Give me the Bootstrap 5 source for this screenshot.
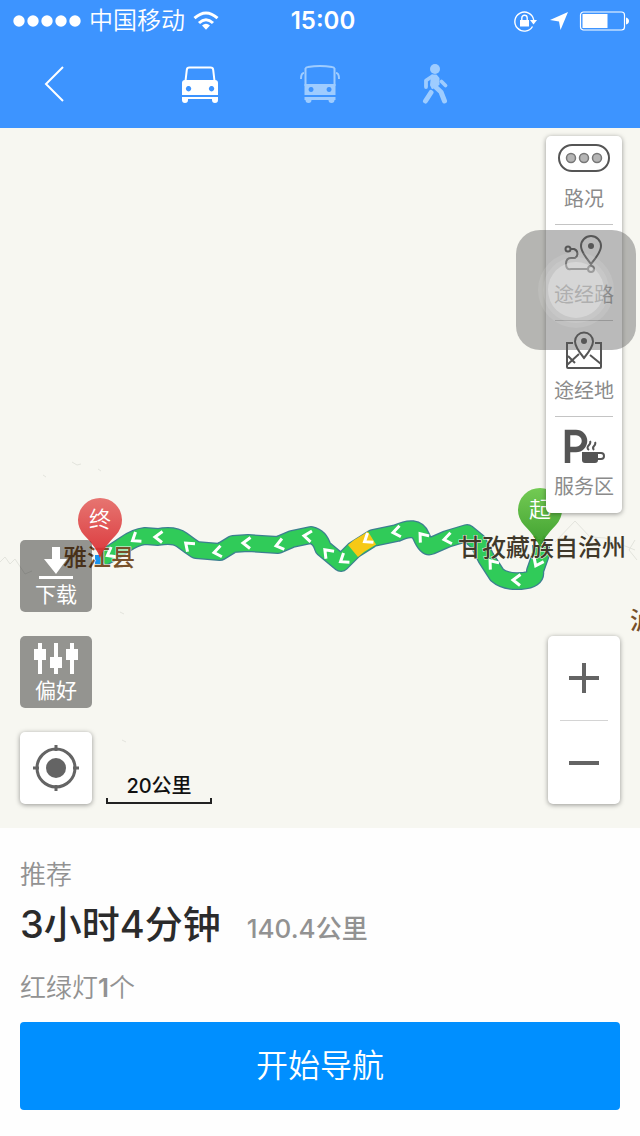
<!DOCTYPE html>
<html lang="zh-CN">
<head>
<meta charset="utf-8">
<meta name="viewport" content="width=device-width, initial-scale=1">
<title>开始导航</title>
<link href="https://cdn.jsdelivr.net/npm/bootstrap@5.3.0/dist/css/bootstrap.min.css" rel="stylesheet">
<style>
  body { font-family: Inter, "Noto Sans CJK SC", sans-serif; background: #fefefe; color: #2e2e2e; }
  svg { display: block; flex: none; }
  button { font-family: inherit; }
  .top-area { background: #3d94ff; color: #fff; }
  .status-bar, .mode-bar { display: grid; grid-template-columns: 1fr auto 1fr; align-items: center; }
  .status-bar { height: 40px; font-size: 24px; line-height: 40px; padding: 1px 11px 0; }
  .status-icons { gap: 10px; }
  .clock { font-weight: 600; padding-left: 6px; }
  .carrier { font-weight: 350; }
  .mode-bar { height: 88px; padding: 0 20px; }
  .plain-btn { background: none; border: 0; padding: 0; color: inherit; display: flex; align-items: center; justify-content: center; }
  .back-btn { width: 68px; height: 88px; }
  .mode-btn { width: 120px; height: 88px; color: #9eccff; }
  .mode-btn.active { color: #fff; }
  .map-area { background: #f7f7f1; padding: 8px 20px 24px; }
  .map-canvas { width: 100%; height: 100%; }
  .map-canvas text { font-size: 24px; font-weight: 500; }
  .map-canvas .pin-text { font-size: 22px; font-weight: 350; }
  .float-box { background: #fff; border-radius: 5px; box-shadow: 0 1px 5px rgba(0,0,0,.4); color: #646464; }
  .tool-list { width: 76px; padding: 0 9px; margin-right: -2px; }
  .tool-item { width: 100%; height: 96px; padding: 9px 0 0; flex-direction: column; justify-content: flex-start; gap: 9px; border-bottom: 1px solid #c4c4c4; color: #555; }
  .tool-item:first-child { height: 89px; padding-top: 2px; }
  .tool-item:last-child { border-bottom: 0; }
  .tool-name { font-size: 20px; line-height: 24px; color: #8b8b8b; white-space: nowrap; }
  .dark-box { width: 72px; height: 72px; padding-top: 4px; border-radius: 5px; background: rgba(0,0,0,.4); color: #fff; flex-direction: column; font-size: 21px; line-height: 28px; }
  .square-box { width: 72px; height: 72px; }
  .zoom-box { width: 72px; padding: 0 12px; }
  .zoom-btn { width: 48px; height: 84px; }
  .zoom-btn + .zoom-btn { border-top: 1px solid #d4d4d4; }
  .scale-mark { width: 106px; margin-left: 14px; color: #111; text-align: center; font-size: 20px; line-height: 24px; font-weight: 500; }
  .scale-line { height: 6px; border: 2px solid #222; border-top: 0; }
  .touch-pad { right: 4px; top: 102px; width: 120px; height: 120px; border-radius: 24px; background: rgba(90,90,90,.42); pointer-events: none; }
  .touch-ring { width: 76px; height: 76px; border-radius: 50%; background: rgba(255,255,255,.1); }
  .touch-ring.mid { width: 66px; height: 66px; }
  .touch-ring.core { width: 56px; height: 56px; background: rgba(255,255,255,.28); }
  .route-panel { padding: 29px 20px 26px; color: #929292; font-size: 26px; }
  .panel-line { line-height: 36px; font-weight: 350; }
  .route-sum { height: 69px; line-height: 62px; gap: 26px; font-weight: 500; }
  .route-time { font-size: 38px; color: #2b2b2b; }
  .start-btn { height: 88px; border: 0; border-radius: 4px; background: #008fff; font-size: 32px; font-weight: 350; color: #fff; margin-top: 16px; }
</style>
</head>
<body class="d-flex flex-column min-vh-100">
<header class="top-area">
  <div class="status-bar">
    <div class="d-flex align-items-center">
      <svg width="70" height="14" fill="#fff" aria-hidden="true"><circle cx="8" cy="7" r="5.7"/><circle cx="22" cy="7" r="5.7"/><circle cx="36" cy="7" r="5.7"/><circle cx="50" cy="7" r="5.7"/><circle cx="64" cy="7" r="5.7"/></svg>
      <span class="carrier ms-2">中国移动</span>
      <svg class="ms-2" width="26" height="20" viewBox="0 0 26 20" fill="none" stroke="#fff" stroke-width="3" aria-hidden="true"><path d="M1.5 7.2Q13-3.2 24.5 7.2M6 12Q13 5.5 20 12"/><path d="M9 14.5Q13 11 17 14.5L13 18.8Z" fill="#fff" stroke="none"/></svg>
    </div>
    <span class="clock">15:00</span>
    <div class="status-icons d-flex align-items-center justify-content-end">
      <svg width="24" height="24" viewBox="0 0 24 24" fill="none" stroke="#fff" stroke-width="1.4" aria-hidden="true"><path d="M19.5 17.5A9.5 9.5 0 1 1 20.7 11"/><path d="M17 11h7l-3.500 4.500z" fill="#fff" stroke="none"/><path d="M7 11h9v6.500H7z" fill="#fff" stroke="none"/><path d="M8.800 11V9a2.700 2.700 0 0 1 5.400 0v2"/></svg>
      <svg width="22" height="20" viewBox="0 0 22 20" fill="#fff" aria-hidden="true"><path d="M21 1 13.500 19 12 10.500 3 9z"/></svg>
      <svg width="50" height="20" viewBox="0 0 50 20" aria-hidden="true"><rect x="1.500" y="1" width="44" height="18" rx="3" fill="none" stroke="#fff" stroke-width="1.200"/><path fill="#fff" d="M3.500 3h25v14h-25zM47 6.500q3 1 3 3.500t-3 3.500z"/></svg>
    </div>
  </div>
  <div class="mode-bar">
    <button class="plain-btn back-btn" aria-label="返回"><svg width="20" height="36" viewBox="0 0 20 36" fill="none" stroke="#fff" stroke-width="2"><path d="M19 1 2 18l17 17"/></svg></button>
    <nav class="d-flex" aria-label="出行方式">
      <button class="plain-btn mode-btn active" aria-label="驾车"><svg width="40" height="40" viewBox="0 0 40 40"><path d="M5.500 17 6.800 5.800Q7 3.500 9.500 3.500h21q2.500 0 2.700 2.300L34.500 17" fill="none" stroke="currentColor" stroke-width="2"/><path fill="currentColor" fill-rule="evenodd" d="M5 16h30q3 0 3 3v12H2V19q0-3 3-3zm3.500 6a2.700 2.700 0 1 0 .1 0zm23 0a2.700 2.700 0 1 0 .1 0zM2 33h36v3q0 3-3 3t-3-3v-1H8v1q0 3-3 3t-3-3z"/></svg></button>
      <button class="plain-btn mode-btn" aria-label="公交"><svg width="40" height="40" viewBox="0 0 40 40"><path d="M5.500 22V4.500Q6 3.200 8 3q12-2 24 0 2 .2 2.500 1.500V22M4 9Q1 9 1 15M36 9q3 0 3 6" fill="none" stroke="currentColor" stroke-width="2"/><path fill="currentColor" fill-rule="evenodd" d="M4.500 20h31v11h-31zm6.500 3a2.500 2.500 0 1 0 .1 0zm18 0a2.500 2.500 0 1 0 .1 0zM4.500 33h31v3h-1q0 3-3 3t-3-3h-17q0 3-3 3t-3-3h-1z"/></svg></button>
      <button class="plain-btn mode-btn" aria-label="步行"><svg width="40" height="42" viewBox="5 0 40 42" fill="none" stroke="currentColor" stroke-linecap="round" stroke-linejoin="round"><circle cx="20" cy="6" r="5" fill="currentColor" stroke="none"/><path stroke-width="3.800" d="M17 13.500 11 17.500v6.500M26.500 18.500l4 4"/><path fill="currentColor" stroke-width="2" d="M17 12.500h4l2.500 3v6l-6 3.500-1.500-3z"/><path stroke-width="5" d="m19.500 23 6.500 6 3.500 9M16 29.500 10.500 38"/></svg></button>
    </nav>
  </div>
</header>

<main class="map-area position-relative overflow-hidden flex-fill d-flex flex-column justify-content-between">
  <svg class="map-canvas position-absolute top-0 start-0" viewBox="0 128 640 700" preserveAspectRatio="xMidYMid slice" role="img" aria-label="雅江县至甘孜藏族自治州路线">
    <defs>
      <linearGradient id="redPin" x1="0" y1="0" x2="0" y2="1"><stop offset="0" stop-color="#e56b67"/><stop offset="1" stop-color="#d9292e"/></linearGradient>
      <linearGradient id="greenPin" x1="0" y1="0" x2="0" y2="1"><stop offset="0" stop-color="#6cc84b"/><stop offset="1" stop-color="#349a24"/></linearGradient>
      <path id="chev" d="M4.500-5.500-3 0l7 5.500" fill="none" stroke="#fff" stroke-width="3"/>
      <path id="road" d="M102 558Q113 553 124 545T145 536L158 537Q174 534 182 540T196 550L220 552 233 544 248 543 278 545 292 539 311 535Q320 537 323 548L341 563 354 550 373 538 397 533Q416 524 421 536T431 546L447 539 467 533 478 542 486 558 497 575Q505 582 521 581T535 571L541 554 541 545"/>
    </defs>
    <path d="M0 562 5 557 10 564 15 559 25 574 32 571M555 542l20-21 15 16 15 1 30 12M635 540l-6 10 8 10M72 462l5 3 4-1M43 475l3 2M120 612l4 2M122 740l4 2M98 469l3 2" fill="none" stroke="#e3e4dd"/>
    <g fill="none" stroke-linejoin="round">
      <use href="#road" stroke="#3c7f90" stroke-width="18"/>
      <use href="#road" stroke="#30cb59" stroke-width="15.500"/>
      <path d="m353 551 6-5 13-8" stroke="#f6c916" stroke-width="15.500"/>
    </g>
    <g>
      <use href="#chev" transform="translate(135 539)rotate(-35)"/><use href="#chev" transform="translate(158 537)"/><use href="#chev" transform="translate(188 545)rotate(40)"/><use href="#chev" transform="translate(217 552)rotate(-10)"/><use href="#chev" transform="translate(246 543)"/><use href="#chev" transform="translate(279 545)rotate(-15)"/><use href="#chev" transform="translate(307 536)rotate(5)"/><use href="#chev" transform="translate(327 552)rotate(45)"/><use href="#chev" transform="translate(343 560)rotate(-35)"/><use href="#chev" transform="translate(367 540)rotate(-35)"/><use href="#chev" transform="translate(396 532)rotate(-10)"/><use href="#chev" transform="translate(422 536)rotate(50)"/><use href="#chev" transform="translate(447 539)rotate(-10)"/><use href="#chev" transform="translate(492 563)rotate(50)"/><use href="#chev" transform="translate(516 580)"/><use href="#chev" transform="translate(537 563)rotate(-65)"/><use href="#chev" transform="translate(110 554)rotate(-30)"/>
    </g>
    <path d="M95 555h6v9h-6z" fill="#1894ef"/>
    <g stroke="#f7f7f1" stroke-width="1" paint-order="stroke">
      <text x="63" y="566" fill="#77502a">雅江县</text>
      <text x="458" y="556" fill="#40392a">甘孜藏族自治州</text>
      <text x="630" y="629" fill="#77502a">泸</text>
    </g>
    <path d="M100 558Q97 548 84 535A22 22 0 1 1 116 535Q103 548 100 558Z" fill="url(#redPin)" fill-opacity=".93"/>
    <path d="M540 548Q537 538 524 525A22 22 0 1 1 556 525Q543 538 540 548Z" fill="url(#greenPin)" fill-opacity=".95"/>
    <text class="pin-text" x="100" y="527" text-anchor="middle" fill="#fff">终</text>
    <text class="pin-text" x="540" y="517" text-anchor="middle" fill="#fff">起</text>
  </svg>

  <div class="tool-list float-box position-relative align-self-end">
    <button class="plain-btn tool-item"><svg width="56" height="40" viewBox="0 0 56 40" fill="#b5b5b5" stroke="#777" stroke-width="1.500"><rect x="3" y="7" width="50" height="26" rx="13" fill="none" stroke="currentColor" stroke-width="2"/><circle cx="15" cy="20" r="4.500"/><circle cx="28" cy="20" r="4.500"/><circle cx="41" cy="20" r="4.500"/></svg><span class="tool-name">路况</span></button>
    <button class="plain-btn tool-item"><svg width="56" height="40" viewBox="0 0 56 40" fill="none" stroke="currentColor" stroke-width="2"><path d="M35 30Q25 18 25 12a10 10 0 0 1 20 0Q45 18 35 30Z"/><circle cx="35" cy="12" r="3" fill="currentColor" stroke="none"/><circle cx="12" cy="15" r="2.500"/><circle cx="35" cy="35" r="3"/><path d="M15 15h3a5 5 0 0 1 1 9h-4q-5 0-5 6t5 5h17"/></svg><span class="tool-name">途经路</span></button>
    <button class="plain-btn tool-item"><svg width="56" height="40" viewBox="0 0 56 40" fill="none" stroke="currentColor" stroke-width="2"><path d="M28 28Q19 17 19 11.500a9 9 0 0 1 18 0Q37 17 28 28Z"/><circle cx="28" cy="11" r="3" fill="currentColor" stroke="none"/><path d="M17 13h-6v24q0 1 1 1h32q1 0 1-1V13h-6M11 35l12-11M12 26l7 7M34 25l11 9"/></svg><span class="tool-name">途经地</span></button>
    <button class="plain-btn tool-item"><svg width="56" height="40" viewBox="0 0 56 40"><path d="M11.500 37V6.500H20a8.500 8.500 0 0 1 0 17h-8" fill="none" stroke="currentColor" stroke-width="5.500"/><path fill="currentColor" stroke="#fff" stroke-width="2" paint-order="stroke" d="M26 26h16v8q0 3-3 3H29q-3 0-3-3z"/><path d="M42 27h3a3 3 0 0 1 0 6h-4M33 24q-3-2 0-5 2-2 1-4M38 24q-2-2 0-4 2-2 1-4" fill="none" stroke="currentColor" stroke-width="2"/></svg><span class="tool-name">服务区</span></button>
  </div>

  <div class="d-flex align-items-end position-relative">
    <div class="d-flex flex-column gap-4">
      <button class="plain-btn dark-box"><svg width="36" height="34" viewBox="0 0 36 34" fill="#fff"><path d="M14 0h8v12h7L18 27 6 12h8zM1 29h34v3H1z"/></svg><span>下载</span></button>
      <button class="plain-btn dark-box"><svg width="46" height="34" viewBox="0 0 46 34" fill="#fff"><path d="M5 0h4v6h4v11H9v14H5V17H1V6h4zM21 0h4v14h4v11h-4v6h-4v-6h-4V14h4zM37 0h4v6h4v11h-4v14h-4V17h-4V6h4z"/></svg><span>偏好</span></button>
      <button class="plain-btn float-box square-box" aria-label="定位"><svg width="48" height="48" viewBox="0 0 48 48" fill="none" stroke="currentColor" stroke-width="3"><circle cx="24" cy="24" r="19"/><circle cx="24" cy="24" r="10" fill="currentColor" stroke="none"/><path d="M24 1v6M24 41v6M1 24h6M41 24h6"/></svg></button>
    </div>
    <div class="scale-mark"><div>20公里</div><div class="scale-line"></div></div>
    <div class="zoom-box float-box ms-auto">
      <button class="plain-btn zoom-btn" aria-label="放大"><svg width="30" height="30" fill="currentColor"><path d="M13 0h4v13h13v4H17v13h-4V17H0v-4h13z"/></svg></button>
      <button class="plain-btn zoom-btn" aria-label="缩小"><svg width="30" height="4" fill="currentColor"><path d="M0 0h30v4H0z"/></svg></button>
    </div>
  </div>

  <div class="touch-pad position-absolute d-flex align-items-center justify-content-center"><div class="touch-ring d-flex align-items-center justify-content-center"><div class="touch-ring mid d-flex align-items-center justify-content-center"><div class="touch-ring core"></div></div></div></div>
</main>

<section class="route-panel">
  <div class="panel-line">推荐</div>
  <div class="route-sum d-flex align-items-baseline"><span class="route-time">3小时4分钟</span><span>140.4公里</span></div>
  <div class="panel-line pt-2">红绿灯<span class="fw-semibold">1</span>个</div>
  <button class="start-btn btn w-100">开始导航</button>
</section>
<script src="https://cdn.jsdelivr.net/npm/bootstrap@5.3.0/dist/js/bootstrap.bundle.min.js"></script>
</body>
</html>
